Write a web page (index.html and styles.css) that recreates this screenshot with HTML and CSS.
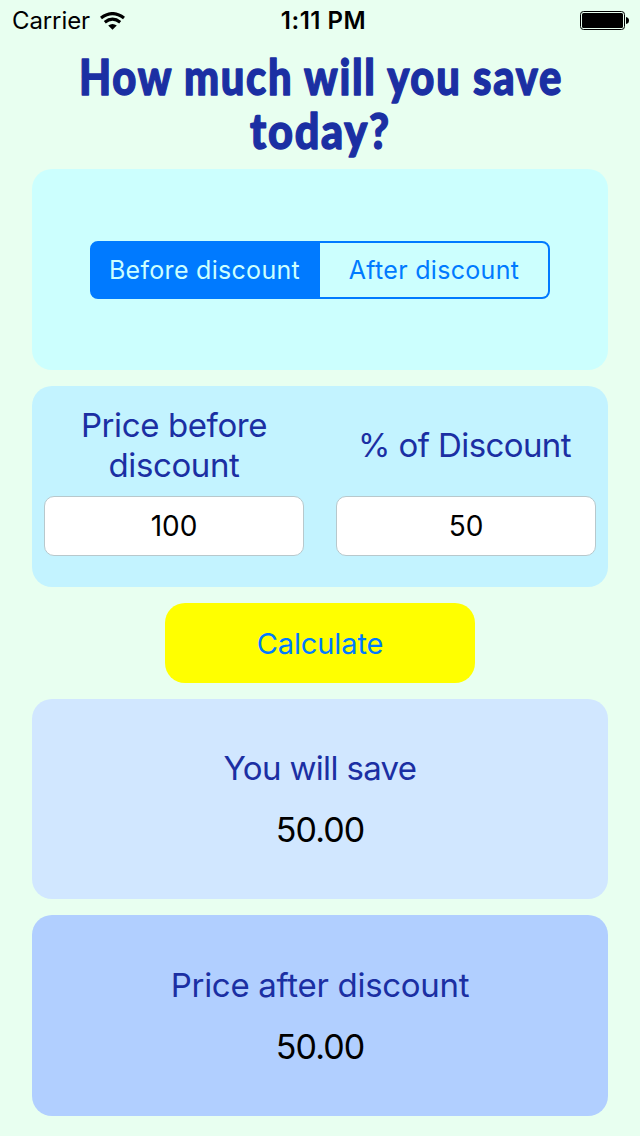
FILE: index.html
```
<!DOCTYPE html>
<html lang="en">
<head>
<meta charset="utf-8">
<title>Discount Calculator</title>
<link rel="stylesheet" href="styles.css">
</head>
<body>
<header class="status">
  <div class="carrier"><span class="carrier-name">Carrier</span>
    <svg class="wifi" width="25" height="18" viewBox="0 0 25 18"><g fill="none" stroke="#000" stroke-width="3.2"><path d="M1 6Q12.5-2.8 24 6"/><path d="M4.8 10.2Q12.5 4.2 20.2 10.2"/></g><path d="M8.2 13.5Q12.5 10.3 16.8 13.5L12.5 17.8Z"/></svg>
  </div>
  <div class="time">1:11 PM</div>
  <svg class="battery" width="49" height="19" viewBox="0 0 49 19"><rect x=".5" y=".5" width="44" height="18" rx="3" fill="none" stroke="#000"/><rect x="2" y="2" width="41" height="15" rx="1.5"/><path d="M46 6Q49 6.5 49 9.5T46 13Z"/></svg>
</header>
<main class="content">
  <h1 class="title">
    <svg width="576" height="128" viewBox="0 -12 576 128">
      <text x="47" y="43" textLength="484" lengthAdjust="spacingAndGlyphs">How much will you save</text>
      <text x="218" y="97" textLength="141" lengthAdjust="spacingAndGlyphs">today?</text>
    </svg>
  </h1>
  <section class="card mode">
    <div class="segments"><button class="segment selected">Before discount</button><button class="segment">After discount</button></div>
  </section>
  <section class="card inputs">
    <label class="field"><span class="label">Price before<br>discount</span><input class="value" value="100"></label>
    <label class="field"><span class="label percent">% of Discount</span><input class="value" value="50"></label>
  </section>
  <button class="calculate">Calculate</button>
  <section class="card result saving"><div class="label save-label">You will save</div><div class="amount">50.00</div></section>
  <section class="card result after"><div class="label after-label">Price after discount</div><div class="amount">50.00</div></section>
</main>
</body>
</html>
```
FILE: styles.css
```
* { box-sizing: border-box; }
body { margin: 0; height: 1136px; background: #e8fff0; font-family: Inter, "Liberation Sans", sans-serif; color: #000; }
button, input { font-family: inherit; margin: 0; padding: 0; }
.status { height: 40px; display: grid; grid-template-columns: 1fr auto 1fr; align-items: center; padding: 1px 11px 0 12px; font-size: 24px; }
.carrier { display: flex; align-items: center; gap: 10px; }
.carrier-name { letter-spacing: -.1px; }
.time { font-weight: 600; font-size: 24px; letter-spacing: .5px; padding-left: 6px; }
.battery { justify-self: end; }
.content { display: flex; flex-direction: column; align-items: center; padding: 0 32px; }
.title { margin: 0; height: 129px; }
.title svg { display: block; overflow: visible; fill: #1b2fa3; stroke: #1b2fa3; stroke-width: 1.4px; stroke-linejoin: round; font-family: "Marker Felt", "Chalkboard SE", Lato, sans-serif; font-size: 49px; font-weight: 900; letter-spacing: 2px; }
.card { width: 576px; border-radius: 20px; }
.mode { height: 201px; background: #ccfffe; display: flex; align-items: center; justify-content: center; }
.segments { width: 460px; height: 58px; display: flex; border: 2px solid #007aff; border-radius: 8px; overflow: hidden; background: #007aff; }
.segment { width: 50%; border: 0; background: #ccfffe; color: #007aff; font-size: 25px; letter-spacing: .3px; }
.selected { background: #007aff; color: #ccfffe; padding-right: 3px; }
.inputs { margin-top: 16px; height: 201px; background: #c3f3ff; padding: 19px 12px 0; display: flex; gap: 32px; }
.field { width: 260px; display: flex; flex-direction: column; }
.field .label { height: 80px; display: flex; align-items: center; justify-content: center; text-align: center; margin-bottom: 11px; }
.label { color: #1b2fa3; font-size: 33px; line-height: 40px; letter-spacing: -.4px; font-weight: 380; }
.field .percent { letter-spacing: -.6px; padding-right: 3px; }
.save-label { letter-spacing: -.65px; }
.after-label { letter-spacing: -.3px; }
.value { width: 260px; height: 60px; border: 1px solid #b8c8cc; border-radius: 10px; background: #fff; text-align: center; font-size: 28px; color: #000; }
.calculate { margin: 16px 0; width: 310px; height: 80px; border: 0; border-radius: 20px; background: #ff0; color: #007aff; font-size: 29px; letter-spacing: -.1px; }
.result { height: 200px; text-align: center; padding-top: 49px; }
.saving { background: #d1e7ff; }
.after { margin-top: 16px; height: 201px; background: #b1cfff; padding-top: 50px; }
.amount { margin-top: 22px; font-size: 34px; line-height: 40px; letter-spacing: -.9px; }
```
